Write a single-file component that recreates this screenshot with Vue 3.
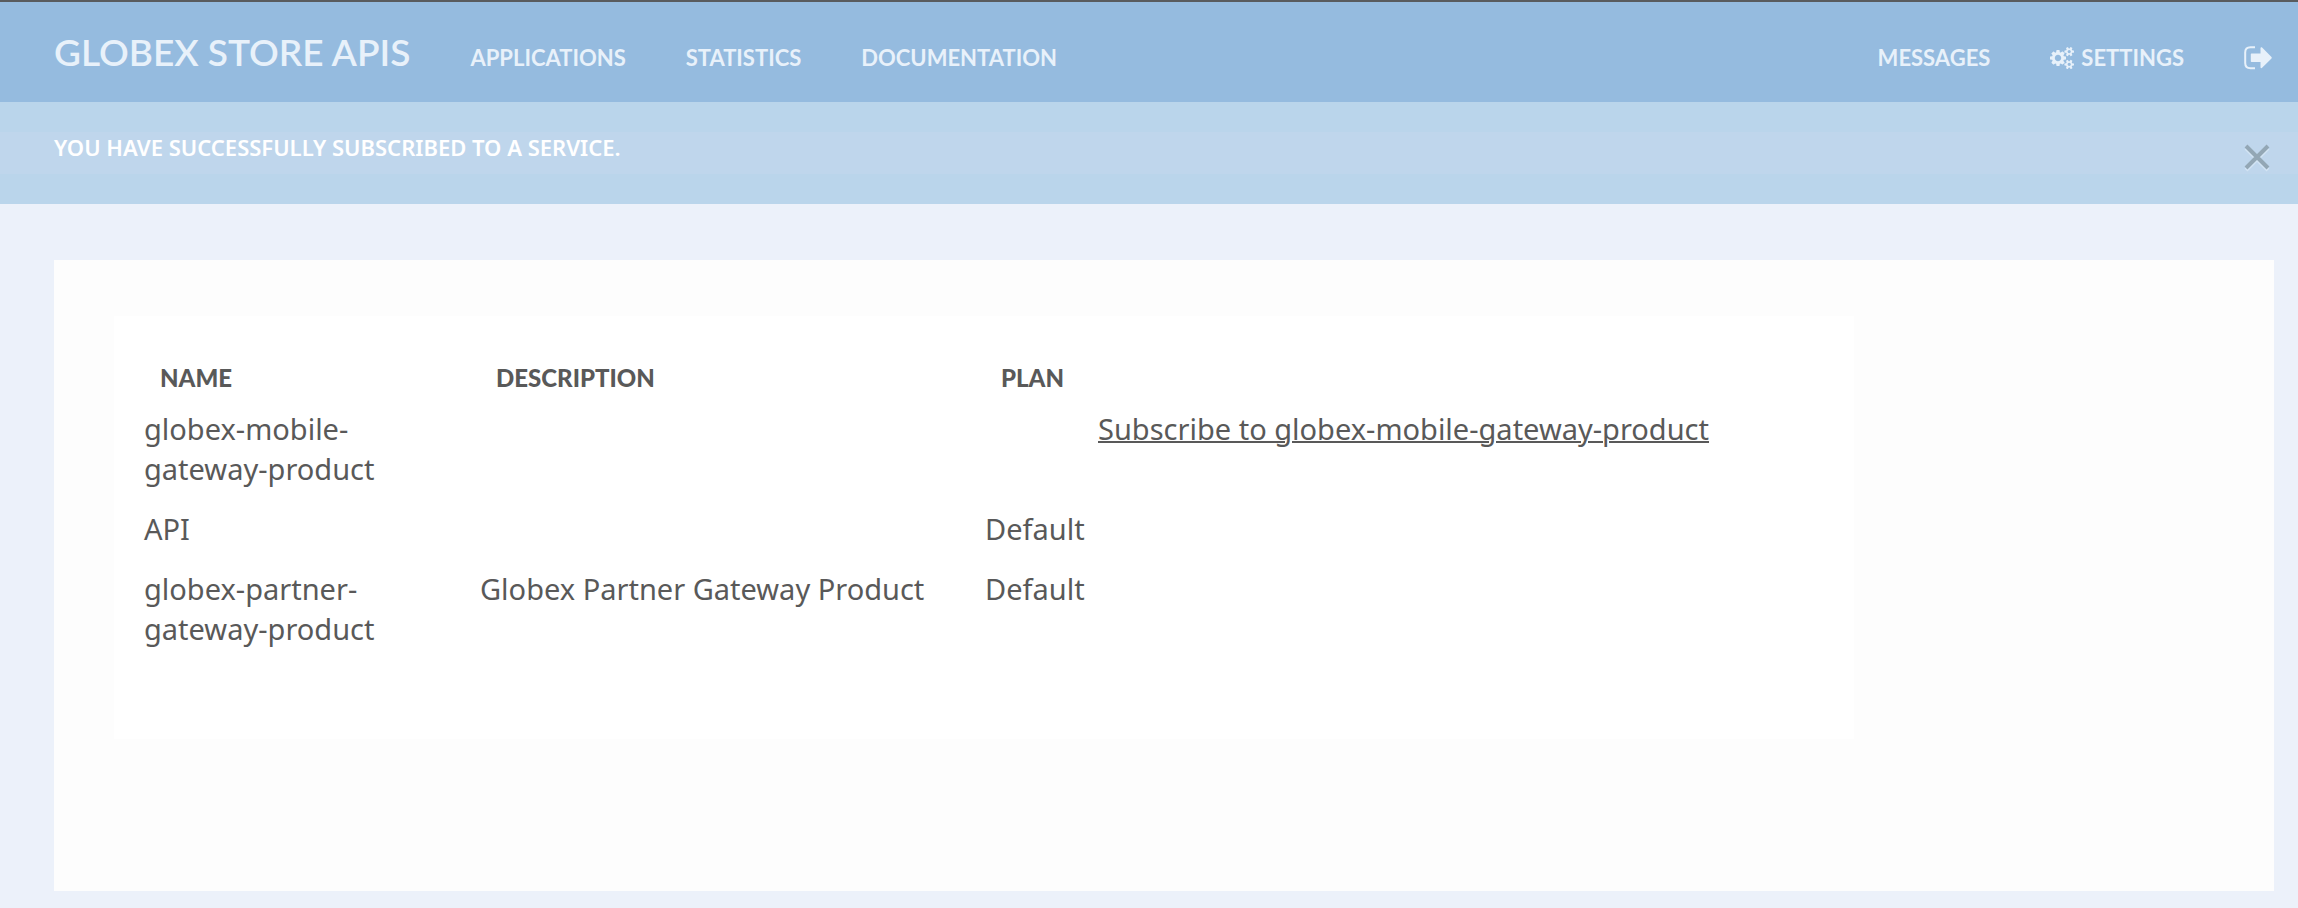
<script setup>
import { ref } from 'vue'

const mainLinks = ['Applications', 'Statistics', 'Documentation']
const services = [
  { name: 'globex-mobile-gateway-product', description: '', plan: '', subscribe: true },
  { name: 'API', description: '', plan: 'Default', subscribe: false },
  { name: 'globex-partner-gateway-product', description: 'Globex Partner Gateway Product', plan: 'Default', subscribe: false },
]
const flashVisible = ref(true)
</script>

<template>
  <div class="page">
    <header class="navbar">
      <a class="brand" href="#">Globex Store APIs</a>
      <nav class="nav">
        <a v-for="link in mainLinks" :key="link" href="#">{{ link }}</a>
      </nav>
      <nav class="nav nav-right">
        <a href="#">Messages</a>
        <a href="#" class="with-icon">
          <svg class="gears" viewBox="0 0 1920 1792" aria-hidden="true">
            <path d="M896 896q0-106-75-181t-181-75-181 75-75 181 75 181 181 75 181-75 75-181zm768 512q0-52-38-90t-90-38-90 38-38 90q0 53 37.500 90.500t90.500 37.500 90.500-37.500 37.500-90.500zm0-1024q0-52-38-90t-90-38-90 38-38 90q0 53 37.500 90.500t90.500 37.500 90.500-37.500 37.500-90.500zm-384 421v185q0 10-7 19.500t-16 10.500l-155 24q-11 35-32 76 34 48 90 115 7 11 7 20 0 12-7 19-23 30-82.500 89.500t-78.500 59.500q-11 0-21-7l-115-90q-37 19-77 31-11 108-23 155-7 24-30 24h-186q-11 0-20-7.500t-10-17.500l-23-153q-34-10-75-31l-118 89q-7 7-20 7-11 0-21-8-144-133-144-160 0-9 7-19 10-14 41-53t47-61q-23-44-35-82l-152-24q-10-1-17-9.500t-7-19.500v-185q0-10 7-19.500t16-10.500l155-24q11-35 32-76-34-48-90-115-7-11-7-20 0-12 7-20 22-30 82-89t79-59q11 0 21 7l115 90q34-18 77-32 11-108 23-154 7-24 30-24h186q11 0 20 7.500t10 17.500l23 153q34 10 75 31l118-89q8-7 20-7 11 0 21 8 144 133 144 160 0 8-7 19-12 16-42 54t-45 60q23 48 34 82l152 23q10 2 17 10.500t7 19.500zm640 533v140q0 16-149 31-12 27-30 52 51 113 51 138 0 4-4 7-122 71-124 71-8 0-46-47t-52-68q-20 2-30 2t-30-2q-14 21-52 68t-46 47q-2 0-124-71-4-3-4-7 0-25 51-138-18-25-30-52-149-15-149-31v-140q0-16 149-31 13-29 30-52-51-113-51-138 0-4 4-7 4-2 35-20t59-34 30-16q8 0 46 46.500t52 67.500q20-2 30-2t30 2q51-71 92-112l6-2q4 0 124 70 4 3 4 7 0 25-51 138 17 23 30 52 149 15 149 31zm0-1024v140q0 16-149 31-12 27-30 52 51 113 51 138 0 4-4 7-122 71-124 71-8 0-46-47t-52-68q-20 2-30 2t-30-2q-14 21-52 68t-46 47q-2 0-124-71-4-3-4-7 0-25 51-138-18-25-30-52-149-15-149-31v-140q0-16 149-31 13-29 30-52-51-113-51-138 0-4 4-7 4-2 35-20t59-34 30-16q8 0 46 46.500t52 67.500q20-2 30-2t30 2q51-71 92-112l6-2q4 0 124 70 4 3 4 7 0 25-51 138 17 23 30 52 149 15 149 31z" />
          </svg>
          Settings
        </a>
        <a href="#" class="with-icon" aria-label="Sign out">
          <svg class="signout" viewBox="0 0 28 24" aria-hidden="true">
            <path class="door" d="M11 1.300H6.500C3 1.300 1.200 3 1.200 6.500v10.500c0 3.500 1.800 5.200 5.300 5.200H11" />
            <path d="M7.500 7.500h9V2.200c0-1 .9-1.300 1.600-.6l9.400 9.500c.4.400.4.900 0 1.300l-9.400 9.400c-.7.700-1.600.4-1.600-.6V16h-9c-.4 0-.7-.3-.7-.7V8.200c0-.4.300-.7.700-.7z" />
          </svg>
        </a>
      </nav>
    </header>

    <div v-if="flashVisible" class="flash" role="status">
      <div class="flash-band">
        <p>You have successfully subscribed to a service.</p>
        <button type="button" aria-label="Close" @click="flashVisible = false">
          <svg viewBox="0 0 26 28" aria-hidden="true">
            <path class="glow" d="M2 4l22 22M24 4L2 26" />
            <path d="M2 2l22 22M24 2L2 24" />
          </svg>
        </button>
      </div>
    </div>

    <main class="panel">
      <section class="card">
        <table>
          <colgroup>
            <col class="col-name" />
            <col class="col-description" />
            <col class="col-plan" />
            <col />
          </colgroup>
          <thead>
            <tr>
              <th scope="col">Name</th>
              <th scope="col">Description</th>
              <th scope="col">Plan</th>
              <td></td>
            </tr>
          </thead>
          <tbody>
            <tr v-for="service in services" :key="service.name">
              <td class="name">{{ service.name }}</td>
              <td>{{ service.description }}</td>
              <td>{{ service.plan }}</td>
              <td><a v-if="service.subscribe" href="#">Subscribe to {{ service.name }}</a></td>
            </tr>
          </tbody>
        </table>
      </section>
    </main>
  </div>
</template>

<style>
body {
  background: #ecf1fa;
}
</style>

<style scoped>
.page {
  box-sizing: border-box;
  min-height: 100vh;
  border-top: 2px solid #595b5e;
  padding-bottom: 17px;
  color: #595959;
  font-family: "Noto Sans", sans-serif;
  font-size: 29px;
  line-height: 40px;
}
.navbar {
  display: flex;
  align-items: baseline;
  gap: 60px;
  box-sizing: border-box;
  height: 100px;
  padding: 24px 26px 0 54px;
  background: #95bbdf;
  font-family: Lato, sans-serif;
  font-weight: 700;
  text-transform: uppercase;
}
.navbar a {
  color: #e8f1fa;
  text-decoration: none;
  white-space: nowrap;
}
.navbar .brand {
  font-size: 37px;
  font-weight: 600;
  line-height: 52px;
}
.nav {
  display: flex;
  gap: 60px;
  font-size: 22px;
}
.nav-right {
  margin-left: auto;
}
.with-icon {
  display: flex;
  align-items: center;
  gap: 7px;
}
.navbar svg {
  fill: #e8f1fa;
}
.gears {
  width: 24px;
  height: 24px;
}
.signout {
  width: 28px;
  height: 24px;
}
.signout .door {
  fill: none;
  stroke: #e8f1fa;
  stroke-width: 2;
}
.flash {
  padding: 30px 0;
  background: #bad5eb;
}
.flash-band {
  display: flex;
  align-items: flex-end;
  justify-content: space-between;
  box-sizing: border-box;
  height: 42px;
  padding: 0 28px 2px 54px;
  background: #bfd6ec;
}
.flash p {
  align-self: flex-start;
  margin: 0;
  color: #fff;
  font-size: 22px;
  font-weight: 600;
  line-height: 30px;
  text-transform: uppercase;
}
.flash button {
  padding: 0;
  border: 0;
  background: none;
  cursor: pointer;
}
.flash svg {
  display: block;
  width: 26px;
  height: 28px;
  fill: none;
  stroke: #93a7b5;
  stroke-width: 4;
}
.flash .glow {
  stroke: #d3e4f4;
}
.panel {
  box-sizing: border-box;
  min-height: 631px;
  margin: 56px 24px 0 54px;
  padding: 56px 60px;
  background: #fdfdfd;
}
.card {
  box-sizing: border-box;
  max-width: 1740px;
  min-height: 423px;
  padding: 40px 30px;
  background: #fff;
}
table {
  width: 100%;
  border-collapse: collapse;
  table-layout: fixed;
}
.col-name {
  width: 336px;
}
.col-description {
  width: 505px;
}
.col-plan {
  width: 113px;
}
th {
  padding: 2px 16px 1px;
  font-family: Lato, sans-serif;
  font-size: 24px;
  font-weight: 900;
  text-align: left;
  text-transform: uppercase;
}
td {
  padding: 10px 0;
  vertical-align: top;
}
.name {
  padding-right: 30px;
}
thead td {
  padding: 0;
}
td a {
  color: inherit;
  text-decoration-thickness: 2px;
}
</style>
